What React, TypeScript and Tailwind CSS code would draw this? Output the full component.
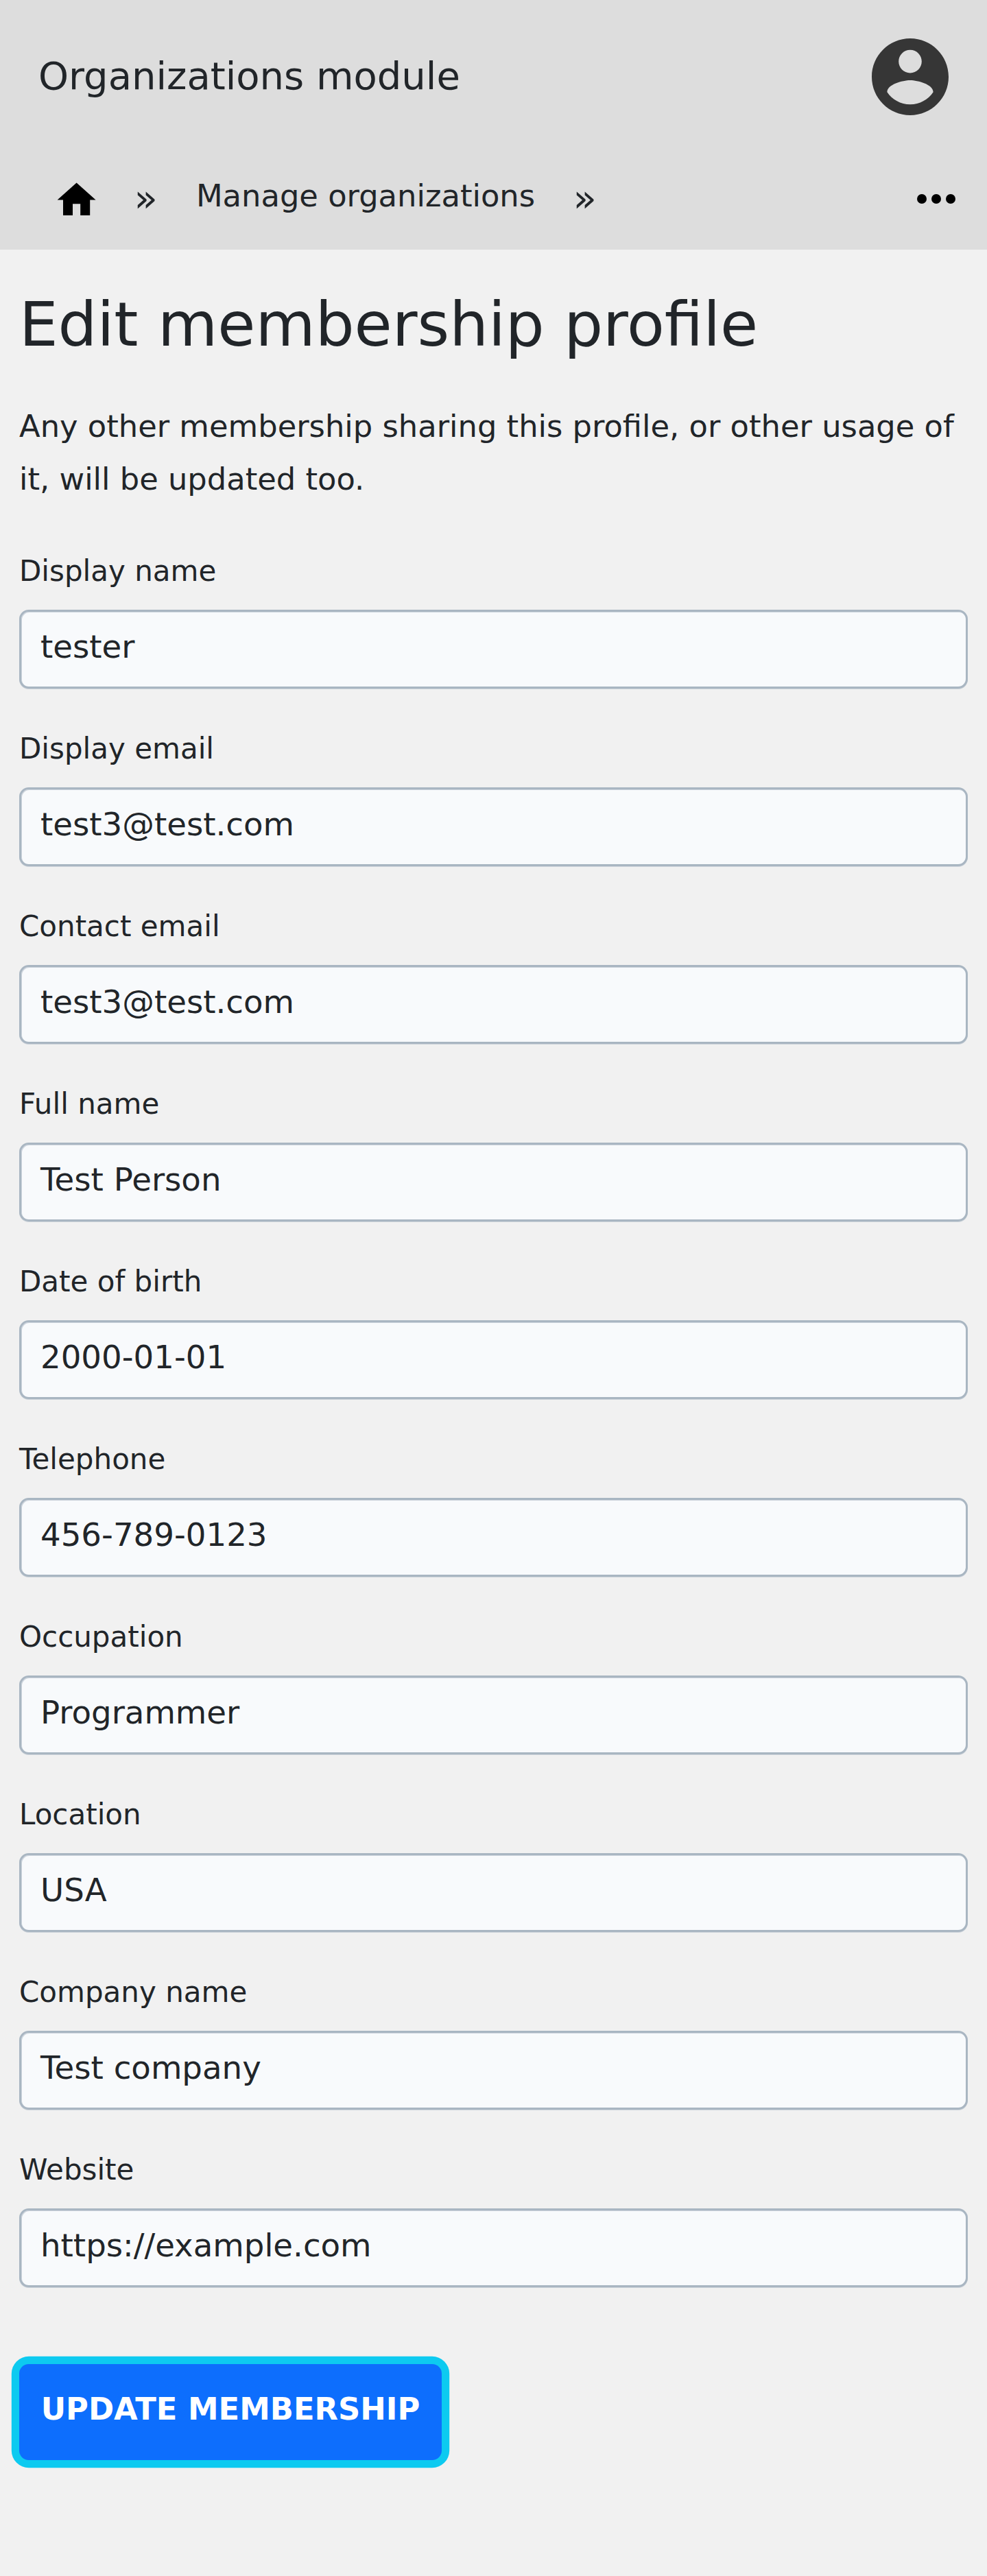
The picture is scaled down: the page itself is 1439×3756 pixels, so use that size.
import type { ReactNode } from "react";

const fields = [
  { label: "Display name", value: "tester" },
  { label: "Display email", value: "test3@test.com" },
  { label: "Contact email", value: "test3@test.com" },
  { label: "Full name", value: "Test Person" },
  { label: "Date of birth", value: "2000-01-01" },
  { label: "Telephone", value: "456-789-0123" },
  { label: "Occupation", value: "Programmer" },
  { label: "Location", value: "USA" },
  { label: "Company name", value: "Test company" },
  { label: "Website", value: "https://example.com" },
];

function Separator({ children }: { children: ReactNode }) {
  return <span className="text-[56px] leading-[62px]">{children}</span>;
}

export default function App() {
  return (
    <div className="h-[3756px] w-full bg-[#f1f1f1] font-['DejaVu_Sans',sans-serif] text-[#212529]">
      <header className="h-[364px] bg-[#dddddd]">
        <div className="flex h-[224px] items-center justify-between px-[56px]">
          <span className="pb-[3px] text-[56px] leading-[84px]">Organizations module</span>
          <svg className="size-[112px]" viewBox="2 2 20 20" fill="#363636">
            <path d="M12 2C6.48 2 2 6.48 2 12s4.48 10 10 10 10-4.48 10-10S17.52 2 12 2zm0 3c1.66 0 3 1.34 3 3s-1.34 3-3 3-3-1.34-3-3 1.34-3 3-3zm0 14.2c-2.5 0-4.71-1.28-6-3.22.03-1.99 4-3.08 6-3.08 1.99 0 5.97 1.09 6 3.08-1.29 1.94-3.5 3.22-6 3.22z" />
          </svg>
        </div>
        <nav className="flex h-[140px] items-start pt-[34px] pr-[32px] pl-[78.4px]">
          <svg className="size-[67.2px] shrink-0" viewBox="0 0 24 24" fill="#000">
            <path d="M10 20v-6h4v6h5v-8h3L12 3 2 12h3v8z" />
          </svg>
          <span className="ml-[50px] w-[90.4px]">
            <Separator>»</Separator>
          </span>
          <a className="w-[549.5px] text-[44.8px] leading-[56px]">Manage organizations</a>
          <Separator>»</Separator>
          <svg className="mt-[-9.6px] ml-auto size-[84px] shrink-0" viewBox="0 0 24 24" fill="#000">
            <circle cx="6" cy="12" r="2" />
            <circle cx="12" cy="12" r="2" />
            <circle cx="18" cy="12" r="2" />
          </svg>
        </nav>
      </header>
      <main className="px-[28px] pt-[55px]">
        <h1 className="text-[89.6px] leading-[108px]">Edit membership profile</h1>
        <p className="mt-[56px] text-[44.8px] leading-[77px]">
          Any other membership sharing this profile, or other usage of it, will be updated too.
        </p>
        <form className="mt-[63px]">
          {fields.map((f) => (
            <div key={f.label} className="h-[259px]">
              <label className="block h-[89px] text-[42px] leading-[65px]">{f.label}</label>
              <div className="h-[115px] rounded-[14px] border-[3px] border-[#a9b6c2] bg-[#f8fafc] px-[28px] text-[46.67px] leading-[102px] shadow-[0_1px_0_#ccd3da,inset_1px_1px_0_#ccd3dc]">
                {f.value}
              </div>
            </div>
          ))}
          <button
            type="button"
            className="mt-[57.4px] flex h-[140px] w-[616px] justify-center rounded-[14px] bg-[#0d6efd] text-[44.8px] leading-[131px] font-bold text-white shadow-[0_0_0_11.2px_#0dcaf0]"
          >
            UPDATE MEMBERSHIP
          </button>
        </form>
      </main>
    </div>
  );
}
